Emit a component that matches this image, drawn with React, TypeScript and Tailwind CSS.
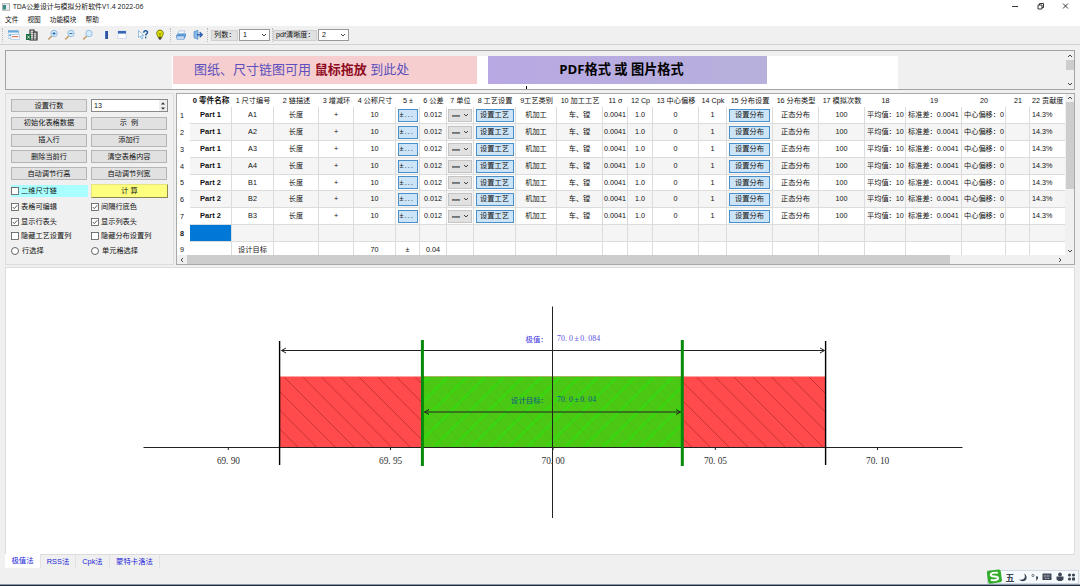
import { useState } from "react";
import type { ReactNode } from "react";
import clsx from "clsx";

interface Column {
  label: string;
  width: number;
  left?: boolean;
}

const columns: Column[] = [
  { label: "0 零件名称", width: 42 },
  { label: "1 尺寸编号", width: 42 },
  { label: "2 链描述", width: 45 },
  { label: "3 增减环", width: 35 },
  { label: "4 公称尺寸", width: 42 },
  { label: "5 ±", width: 24 },
  { label: "6 公差", width: 27 },
  { label: "7 单位", width: 27 },
  { label: "8 工艺设置", width: 42 },
  { label: "9工艺类别", width: 41 },
  { label: "10 加工工艺", width: 46 },
  { label: "11 σ", width: 25 },
  { label: "12 Cp", width: 25 },
  { label: "13 中心偏移", width: 46 },
  { label: "14 Cpk", width: 28 },
  { label: "15 分布设置", width: 46 },
  { label: "16 分布类型", width: 46 },
  { label: "17 模拟次数", width: 46 },
  { label: "18", width: 41 },
  { label: "19", width: 56 },
  { label: "20", width: 44 },
  { label: "21", width: 24 },
  { label: "22 贡献度", width: 35, left: true },
];

const parts = [
  ["Part 1", "A1"],
  ["Part 1", "A2"],
  ["Part 1", "A3"],
  ["Part 1", "A4"],
  ["Part 2", "B1"],
  ["Part 2", "B2"],
  ["Part 2", "B3"],
];

const rowHeights = [17, 17, 17, 17, 16, 17, 17, 17, 13];

const rows: string[][] = [
  ...parts.map(([part, code]) => [
    part, code, "长度", "+", "10", "±...", "0.012", "mm", "设置工艺", "机加工", "车、镗", "0.0041",
    "1.0", "0", "1", "设置分布", "正态分布", "100", "平均值：10", "标准差：0.0041", "中心偏移：0", "", "14.3%",
  ]),
  [],
  ["", "设计目标", "", "", "70", "±", "0.04"],
];

function Chevron({ dir = "down", className = "" }: { dir?: "up" | "down" | "left" | "right"; className?: string }) {
  const d = {
    up: "M1 4 3 2 5 4",
    down: "M1 2 3 4 5 2",
    left: "M4 1 2 3 4 5",
    right: "M2 1 4 3 2 5",
  }[dir];
  return (
    <svg viewBox="0 0 6 6" className={clsx("h-1.5 w-1.5 shrink-0", className)}>
      <path d={d} fill="none" stroke="#444" strokeWidth="1" />
    </svg>
  );
}

function Cell({ col, row, value }: { col: number; row: number; value: string }) {
  if (row < 7 && (col === 5 || col === 8 || col === 15)) {
    return (
      <button
        className={clsx(
          "h-[13px] border border-[#4a8fca] bg-[#cce4f7] leading-none",
          col === 5 && "w-5 pl-[1px] text-left tracking-[1.2px]",
          col === 8 && "w-[38px]",
          col === 15 && "w-[41px]"
        )}
      >
        {value}
      </button>
    );
  }
  if (row < 7 && col === 7) {
    return (
      <div className="flex h-[13px] w-6 items-center justify-between border border-[#c4c4c4] bg-[#e1e1e1] pr-[2px] pl-[3px]">
        <span className="pt-[2px] text-[4.4px] font-bold">{value}</span>
        <Chevron />
      </div>
    );
  }
  return <>{value}</>;
}

function DataTable() {
  return (
    <div className="flex h-[172px] w-[899px] flex-col border border-[#a9a9a9] bg-white">
      <div className="flex h-[161px]">
        <div className="w-[888px] overflow-hidden">
          <div className="flex h-[13px] items-center pl-[13px]">
            {columns.map((c, i) => (
              <div
                key={c.label}
                className={clsx(
                  "flex shrink-0 whitespace-nowrap",
                  c.left ? "pl-0.5" : "justify-center",
                  i === 0 && "text-[7.6px] font-bold"
                )}
                style={{ width: c.width }}
              >
                {c.label}
              </div>
            ))}
          </div>
          {rowHeights.map((h, r) => (
            <div key={r} className="flex" style={{ height: h }}>
              <div className={clsx("flex w-[13px] shrink-0 items-center pl-[3px]", r === 7 && "font-bold", r === 8 && "pt-[3px]")}>
                {r + 1}
              </div>
              {columns.map((c, i) => (
                <div
                  key={i}
                  className={clsx(
                    "flex shrink-0 items-center overflow-hidden border-r border-[#dcdcdc] whitespace-nowrap",
                    r < 8 ? "border-b" : "pt-[3px]",
                    c.left || (i >= 18 && i <= 20) ? "justify-start pl-[2px]" : "justify-center",
                    r === 7 && i === 0 ? "bg-[#0078d7]" : r % 2 === 1 ? "bg-[#f5f5f5]" : "bg-white",
                    i === 0 && "text-[7.5px] font-bold",
                    i === 22 && "border-r-0"
                  )}
                  style={{ width: c.width }}
                >
                  <Cell col={i} row={r} value={rows[r][i] ?? ""} />
                </div>
              ))}
            </div>
          ))}
        </div>
        <div className="flex flex-1 flex-col items-center justify-between bg-[#f0f0f0] py-[1px]">
          <Chevron dir="up" />
          <div className="mt-[1px] mb-auto h-[87px] w-[8px] bg-[#cdcdcd]" />
          <Chevron />
        </div>
      </div>
      <div className="flex h-[9px] items-center bg-[#f0f0f0]">
        <Chevron dir="left" className="ml-[2px]" />
        <div className="ml-[2px] h-[9px] w-[763px] bg-[#cdcdcd]" />
        <Chevron dir="right" className="mr-[11px] ml-auto" />
      </div>
    </div>
  );
}

function Btn({ children }: { children: ReactNode }) {
  return (
    <button className="h-[13px] w-[76px] border border-[#b5b5b5] bg-[#e1e1e1] leading-none whitespace-pre">{children}</button>
  );
}

function Check({ label, checked, className }: { label: string; checked?: boolean; className?: string }) {
  const [on, setOn] = useState(!!checked);
  return (
    <div className={clsx("flex w-[77px] cursor-pointer items-center gap-[2px]", className)} onClick={() => setOn(!on)}>
      <svg viewBox="0 0 8 8" className="h-2 w-2 shrink-0">
        <rect x="0.5" y="0.5" width="7" height="7" fill="#fff" stroke="#555" strokeWidth="0.8" />
        {on && <path d="M1.8 4 3.3 5.6 6.3 2.2" fill="none" stroke="#333" strokeWidth="0.8" />}
      </svg>
      <span className="whitespace-nowrap">{label}</span>
    </div>
  );
}

function Radio({ label }: { label: string }) {
  return (
    <div className="flex w-[77px] items-center gap-[3px]">
      <span className="h-2 w-2 rounded-full border border-[#666] bg-white" />
      <span>{label}</span>
    </div>
  );
}

function Controls() {
  return (
    <div className="h-[172px] w-[169px] border border-[#dcdcdc] pt-[3px] pl-[5px]">
      <div className="flex h-[17px] items-center gap-1">
        <Btn>设置行数</Btn>
        <div className="flex h-[13px] w-[77px] items-center border border-[#8a8a8a] bg-white">
          <span className="flex-1 pl-[2px]">13</span>
          <div className="flex h-full w-2 flex-col items-center justify-center bg-[#eee]">
            <svg viewBox="0 0 6 10" className="h-[10px] w-1.5">
              <path d="M1 3.5 3 1.2 5 3.5ZM1 6.5 3 8.8 5 6.5Z" fill="#333" />
            </svg>
          </div>
        </div>
      </div>
      <div className="flex h-[18px] items-center gap-1"><Btn>初始化表格数据</Btn><Btn>示  例</Btn></div>
      <div className="flex h-4 items-center gap-1"><Btn>插入行</Btn><Btn>添加行</Btn></div>
      <div className="flex h-[17px] items-center gap-1"><Btn>删除当前行</Btn><Btn>清空表格内容</Btn></div>
      <div className="flex h-[17px] items-center gap-1"><Btn>自动调节行高</Btn><Btn>自动调节列宽</Btn></div>
      <div className="flex h-[17px] items-center gap-[3px]">
        <Check label="二维尺寸链" className="h-3 bg-[#aaffff]" />
        <button className="h-[14px] w-[77px] border border-t-[#e6e680] border-r-[#8a8a50] border-b-[#8a8a50] border-l-[#e6e680] bg-[#ffff7f] leading-none whitespace-pre">
          计 算
        </button>
      </div>
      <div className="flex h-[15px] items-center gap-[3px]"><Check label="表格可编辑" checked /><Check label="间隔行底色" checked /></div>
      <div className="flex h-[15px] items-center gap-[3px]"><Check label="显示行表头" checked /><Check label="显示列表头" checked /></div>
      <div className="flex h-[14px] items-center gap-[3px]"><Check label="隐藏工艺设置列" /><Check label="隐藏分布设置列" /></div>
      <div className="flex h-[15px] items-center gap-[3px]"><Radio label="行选择" /><Radio label="单元格选择" /></div>
    </div>
  );
}

function Icon({ children, className }: { children: ReactNode; className?: string }) {
  return (
    <svg viewBox="0 0 12 12" fill="none" className={clsx("h-3 w-3 shrink-0", className)}>
      {children}
    </svg>
  );
}

function Magnifier({ sign, className }: { sign?: string; className: string }) {
  return (
    <Icon className={className}>
      <path d="M1.3 10.5 4.8 6.9" stroke="#c79a62" strokeWidth="1.5" />
      <circle cx="7" cy="4.5" r="3.2" fill="#d5ecfc" stroke="#8fb6dd" strokeWidth="0.9" />
      {sign && <path d={sign} stroke="#1f62b0" strokeWidth="0.9" />}
    </Icon>
  );
}

function Combo({ label, labelClass, value }: { label: string; labelClass: string; value: string }) {
  return (
    <>
      <span className={clsx("flex h-[11px] items-center border border-[#cfcfcf] bg-[#e1e1e1] whitespace-nowrap", labelClass)}>
        {label}
      </span>
      <div className="ml-[1px] flex h-3 w-[31px] items-center justify-between border border-[#999] bg-white pr-[2px] pl-[3px]">
        {value}
        <Chevron />
      </div>
    </>
  );
}

function Toolbar() {
  return (
    <div className="flex h-[19px] items-center border-b border-[#d2d2d2] pl-0.5">
      <div className="h-[14px] w-[1px] border-l border-dotted border-[#bbb]" />
      <Icon className="ml-[5px]">
        <rect x="0" y="1.5" width="10.5" height="8" fill="#e9f3fb" stroke="#8fb5d3" strokeWidth="0.6" />
        <rect x="0" y="1.5" width="10.5" height="2" fill="#66a9df" />
        <path d="M0.8 6.2h5" stroke="#4b92d3" strokeWidth="1.2" />
        <rect x="3" y="5.3" width="8.7" height="4.9" fill="#fff" stroke="#7fb0da" strokeWidth="0.5" />
        <path d="M4 7.6h6.500" stroke="#e47b62" strokeWidth="1.2" />
      </Icon>
      <Icon className="ml-1.5">
        <path d="M4 1h4v2h3v8H4Z" fill="#fff" stroke="#222" strokeWidth="1.1" />
        <path d="M5 3.2h5M5 5.2h6M5 7.2h6M5 9.2h6M7.5 3v8" stroke="#333" strokeWidth="0.7" />
        <rect x="0" y="5" width="5" height="6" fill="#1c6b3f" />
        <path d="m1.4 6.6 2.2 3M3.6 6.6l-2.2 3" stroke="#fff" strokeWidth="0.7" />
      </Icon>
      <Magnifier className="ml-[9px]" sign="M5.5 4.5h3M7 3v3" />
      <Magnifier className="ml-[5px]" sign="M5.5 4.5h3" />
      <Magnifier className="ml-1.5" />
      <Icon className="ml-1.5">
        <rect x="2" y="2" width="6" height="8" fill="#eaf3fc" />
        <rect x="5.2" y="2" width="2.8" height="8" fill="#27549f" />
      </Icon>
      <Icon className="ml-1">
        <rect x="2" y="2" width="8" height="7.5" fill="#fff" stroke="#a9c3e2" strokeWidth="0.5" />
        <rect x="2" y="2" width="8" height="2.6" fill="#3567b2" />
      </Icon>
      <Icon className="ml-[9px]">
        <path d="M1.5 1.5v7l1.8-1.5 1.3 3 1.2-.6-1.2-2.8h2.2Z" fill="#fff" stroke="#6aa5d8" strokeWidth="0.7" />
        <path d="M6.7 3.7C6.8 1.2 10.8 1.2 10.5 3.6 10.4 4.8 8.7 5 8.7 6.6M8.7 7.7v1.5" stroke="#1a5b9c" strokeWidth="1.4" />
      </Icon>
      <Icon className="ml-[5px]">
        <path d="M6 1a3.4 3.4 0 0 0-2 6.1V8.4h4V7.1A3.4 3.4 0 0 0 6 1Z" fill="#e9e800" stroke="#555600" strokeWidth="0.8" />
        <path d="M4.5 3.6 6 5.2l1.5-1.6M6 5v3" stroke="#555600" strokeWidth="0.6" />
        <path d="M4.7 8.6h2.6v1.9H4.7Z" fill="#333" />
      </Icon>
      <div className="ml-1 h-[14px] w-[1px] border-l border-dotted border-[#bbb]" />
      <Icon className="ml-1">
        <path d="M4 2h6L8.5 5H2.5Z" fill="#fff" stroke="#8fb2d9" strokeWidth="0.6" />
        <path d="M1 6.5 3 4.6h8L11 7 9.5 10H2Z" fill="#5f9bd7" />
        <path d="M1.5 7h8L9 10.4H2Z" fill="#c3dcf3" stroke="#4a84c2" strokeWidth="0.5" />
      </Icon>
      <Icon className="ml-[5px]">
        <path d="M2 2.6 6 1.3v9L2 8.8Z" fill="#86b9e8" stroke="#4c82bf" strokeWidth="0.6" />
        <path d="M5 5.8h5.2M7.700 3.300l2.500 2.500-2.500 2.500" stroke="#2b5fa8" strokeWidth="1.400" />
      </Icon>
      <div className="ml-[3px] h-[14px] w-[1px] border-l border-dotted border-[#bbb]" />
      <Combo label="列数：" labelClass="ml-[3px] w-[27px] pl-[2px]" value="1" />
      <div className="ml-[2px] h-[14px] w-[1px] border-l border-dotted border-[#bbb]" />
      <Combo label="pdf清晰度：" labelClass="w-[44px] pl-[2px]" value="2" />
    </div>
  );
}

function DropArea() {
  return (
    <div className="flex h-[40px] border border-[#a3a3a3] text-[13px]">
      <div className="relative ml-[166px] flex w-[726px] bg-white">
        <div className="absolute top-0 left-0 h-[5px] w-full bg-[#efefef]" />
        <div className="mt-[5px] ml-[1px] h-7 w-[304px] bg-[#f6cecf] pt-[1px] pl-[21px] leading-[25px] whitespace-pre text-[#5b50bd]">
          图纸、尺寸链图可用 <b className="text-[#8e0b22]">鼠标拖放</b> 到此处
        </div>
        <div className="mt-[5px] ml-[11px] h-[28px] w-[279px] bg-linear-to-r from-[#b9a8e3] to-[#b7b0dc] pr-3 text-center font-['Open_Sans','Noto_Sans_CJK_SC',sans-serif] text-[13.200px] leading-[26px] font-bold whitespace-pre text-black">
          PDF格式 或 图片格式
        </div>
        <div className="absolute bottom-0 left-[354px] h-[3px] w-[1px] bg-black" />
      </div>
      <div className="ml-auto flex w-[9px] flex-col items-center py-[2px]">
        <Chevron dir="up" />
        <div className="mt-[1px] mb-auto h-[10px] w-2 bg-[#cdcdcd]" />
        <Chevron />
      </div>
    </div>
  );
}

// evenly spaced half-width glyphs, ± takes a full-width slot
function MonoText({ x, y, step, size, color, text }: { x: number; y: number; step: number; size: number; color: string; text: string }) {
  let pos = x;
  const xs: number[] = [];
  for (const ch of text) {
    xs.push(ch === "±" ? pos + step * 0.4 : pos);
    pos += ch === "±" ? step * 1.8 : step;
  }
  return (
    <text x={xs.join(" ")} y={y} fontSize={size} fill={color} fontFamily="'Liberation Serif', serif">
      {text}
    </text>
  );
}

const PITCH = 18.75;

function Chart() {
  const ticks = [
    { x: 228.3, label: "69.90" },
    { x: 390.5, label: "69.95" },
    { x: 553, label: "70.00" },
    { x: 715.3, label: "70.05" },
    { x: 877.5, label: "70.10" },
  ];
  return (
    <svg viewBox="6 268 1068 286" width="1068" height="286" className="block">
      <defs>
        <clipPath id="reds"><path d="M280 377H422V447H280ZM683 377H826V447H683Z" /></clipPath>
        <clipPath id="green"><rect x="423" y="377" width="259" height="70" /></clipPath>
      </defs>
      <rect x="280" y="376.5" width="546" height="71" fill="#ff4b4b" />
      <rect x="422" y="376.5" width="260" height="71" fill="#4bc814" />
      <g clipPath="url(#reds)" stroke="#b3262b" strokeWidth="0.7">
        {Array.from({ length: 34 }, (_, i) => {
          const x = 284.3 + (i - 4) * PITCH;
          return <path key={i} d={`M${x} 377.3l71 71`} />;
        })}
      </g>
      <g clipPath="url(#green)">
        {Array.from({ length: 22 }, (_, i) => {
          const x = 429 + i * PITCH;
          return <path key={i} d={`M${x} 377l-71 71`} stroke="#33dc0f" strokeWidth="1.8" />;
        })}
        {Array.from({ length: 34 }, (_, i) => {
          const x = 284.3 + (i - 4) * PITCH;
          return <path key={i} d={`M${x} 377.3l71 71`} stroke="#5a9a1c" strokeWidth="0.5" strokeOpacity="0.5" />;
        })}
      </g>
      <g stroke="#222" strokeWidth="1" fill="none">
        <path d="M143.5 447.5H962.5M552.5 306.5V518" />
        {ticks.map((t) => <path key={t.label} d={`M${t.x} 447v3`} />)}
        <path d="M281.5 350.5H824.5M286 348l-4.5 2.5 4.5 2.5M820 348l4.5 2.5-4.5 2.5" />
        <path d="M424.5 412H680.5M429 409.5l-4.5 2.5 4.5 2.5M676 409.5l4.5 2.5-4.5 2.5" />
      </g>
      <path d="M279.6 341V465M825.6 341V465" stroke="#000" strokeWidth="1.4" />
      <path d="M422.4 340V466M682.3 340V466" stroke="#078a0c" strokeWidth="3" />
      {ticks.map((t) => (
        <MonoText key={t.label} x={t.x - 11.4} y={464} step={4.6} size={9.4} color="#333" text={t.label} />
      ))}
      <text x="525.5" y="341.5" fontSize="7.4" fill="#3a30e0" fontFamily="'Noto Sans CJK SC', sans-serif">极值：</text>
      <MonoText x={557} y={341.2} step={4} size={7.8} color="#5a50e0" text="70.0±0.084" />
      <text x="511" y="402.7" fontSize="7.4" fill="#14508a" fontFamily="'Noto Sans CJK SC', sans-serif">设计目标：</text>
      <MonoText x={557} y={402.4} step={4} size={7.8} color="#14508a" text="70.0±0.04" />
    </svg>
  );
}

function ImeBar() {
  return (
    <div className="absolute right-[1px] bottom-[2px] flex h-[14px] w-[92px] items-center border border-[#cfdae6] bg-[#f7fafd]">
      <svg viewBox="0 0 92 15" className="h-[15px] w-[92px] shrink-0 overflow-visible">
        <g transform="rotate(-8 7 7)">
          <rect x="-0.5" y="0" width="14" height="13" rx="2" fill="#34ad2c" />
          <path d="M10.3 3.4C7.500 2 3.100 2.500 3 4.500c0 2.300 7.200 1.400 7 3.900-.2 2-4.500 2.200-7.600.9" fill="none" stroke="#fff" strokeWidth="1.900" />
        </g>
        <text x="17.5" y="10.8" fontSize="9" fontWeight="bold" fill="#3b4554" fontFamily="'Noto Sans CJK SC', sans-serif">五</text>
        <g fill="#3b4554">
          <path d="M36 3.500c2.500 4-.5 7-4.800 6 1.500 2.500 7 2.500 7.400-1.500.2-2-1-3.800-2.600-4.500Z" />
          <circle cx="45" cy="5.500" r="1.100" fill="none" stroke="#3b4554" strokeWidth="0.700" />
          <path d="M48 6.500h2v2l-1.500 2h-.6l.6-2H48Z" />
          <rect x="54.500" y="3.500" width="9" height="6.500" rx="0.600" />
          <circle cx="72" cy="4.500" r="1.900" />
          <path d="M68.500 6.500h7v3l-2 1.500h-3l-2-1.500Z" />
          <circle cx="81.500" cy="5" r="1.600" />
          <circle cx="85.500" cy="5" r="1.600" />
          <circle cx="81.500" cy="9" r="1.600" />
          <rect x="84" y="7.500" width="3" height="3" />
        </g>
        <path d="M55.800 5.300h6.400M55.800 6.800h6.400M57 8.500h4" stroke="#fff" strokeWidth="0.600" strokeDasharray="1 0.500" />
      </svg>
    </div>
  );
}

export default function App() {
  const tabs = ["极值法", "RSS法", "Cpk法", "蒙特卡洛法"];
  const [tab, setTab] = useState(0);

  return (
    <div className="relative flex h-[586px] w-[1080px] flex-col overflow-hidden bg-[#f0f0f0] font-['Liberation_Sans','Noto_Sans_CJK_SC',sans-serif] text-[7.2px] leading-none text-[#111]">
      <header className="flex h-[13px] items-center bg-white pl-[2px] font-['Open_Sans','Noto_Sans_CJK_SC',sans-serif] text-[6.9px]">
        <svg viewBox="0 0 8 8" className="h-2 w-2">
          <rect x="0.3" y="0.8" width="7.4" height="6.4" fill="#e8eef2" stroke="#888" strokeWidth="0.6" />
          <rect x="1" y="2" width="3" height="4.5" fill="#3c8a82" />
        </svg>
        <span className="ml-[3px] pt-[1px]">TDA公差设计与模拟分析软件V1.4 2022-06</span>
        <svg viewBox="0 0 64 8" className="mr-2.5 mb-[1px] ml-auto h-2 w-16" fill="none" stroke="#222" strokeWidth="0.9">
          <path d="M6 4.5h6M32 3h4v4h-4ZM33.5 3V1.5h4v4H36M57 1.5l5 5M62 1.5l-5 5" />
        </svg>
      </header>
      <nav className="flex h-[13px] items-center gap-[9px] bg-white pt-[1px] pl-[5px] text-[6.7px]">
        {["文件", "视图", "功能模块", "帮助"].map((m) => <span key={m}>{m}</span>)}
      </nav>
      <Toolbar />

      <main className="flex flex-col pt-[5px] pr-[5px] pl-[5px]">
        <DropArea />
        <div className="mt-[3px] flex justify-between">
          <Controls />
          <DataTable />
        </div>
        <div className="mt-[2px] h-[288px] border border-[#dcdcdc] bg-white">
          <Chart />
        </div>
        <div className="flex h-[13px] text-[7.4px] text-[#1b1bd8]">
          {tabs.map((t, i) => (
            <button
              key={t}
              onClick={() => setTab(i)}
              className={clsx(
                "border-r border-[#e2e2e2] leading-none",
                i === 0 ? "w-9" : i === 3 ? "w-[50px]" : i === 1 ? "w-[35px]" : "w-[34px]",
                tab === i && "-mt-px bg-white"
              )}
            >
              {t}
            </button>
          ))}
        </div>
      </main>

      <footer className="mt-auto h-[2px] border-t border-[#8d99a8] bg-[#1f2b3a]" />
      <ImeBar />
    </div>
  );
}
